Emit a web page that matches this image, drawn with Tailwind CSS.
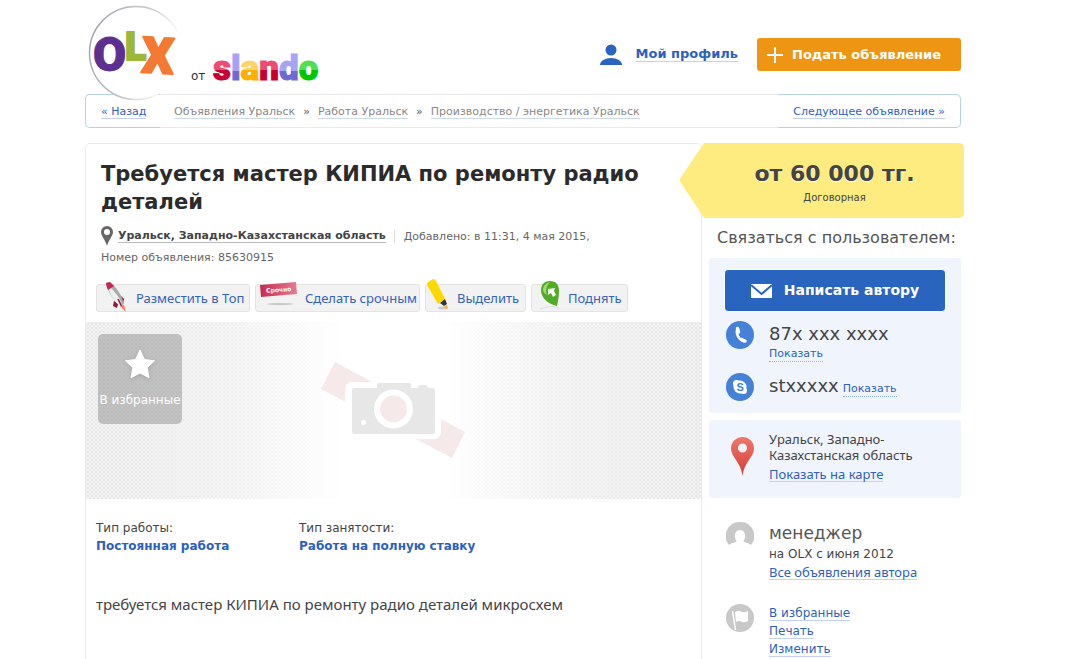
<!DOCTYPE html>
<html lang="ru">
<head>
    <meta charset="UTF-8">
    <meta name="viewport" content="width=device-width, initial-scale=1.0">
    <title>Требуется мастер КИПИА по ремонту радио деталей</title>
    <script src="https://cdn.jsdelivr.net/npm/@tailwindcss/browser@4"></script>
</head>
<body class="bg-white pr-[18px] font-['DejaVu_Sans',Verdana,sans-serif] text-[#444]">
<div class="max-w-[880px] mx-auto pr-1">

    <!-- Шапка -->
    <header class="relative z-10 flex justify-between h-[94px]">
        <a href="/" aria-label="OLX от slando" class="block">
            <svg width="240" height="106" viewBox="85 0 240 106">
                <defs>
                    <linearGradient id="ring" x1="0" y1="0.3" x2="1" y2="0.6">
                        <stop offset="0" stop-color="#a0a5ac"/>
                        <stop offset="0.5" stop-color="#c4c7cb"/>
                        <stop offset="0.9" stop-color="#fff"/>
                    </linearGradient>
                    <linearGradient id="red" gradientUnits="userSpaceOnUse" x1="0" y1="53" x2="0" y2="82">
                        <stop offset="0.58" stop-color="#ee4a72"/><stop offset="0.58" stop-color="#c80032"/>
                    </linearGradient>
                    <linearGradient id="violet" gradientUnits="userSpaceOnUse" x1="0" y1="53" x2="0" y2="82">
                        <stop offset="0.63" stop-color="#a5a4f4"/><stop offset="0.63" stop-color="#6b6bd2"/>
                    </linearGradient>
                    <linearGradient id="yellow" gradientUnits="userSpaceOnUse" x1="0" y1="53" x2="0" y2="82">
                        <stop offset="0.58" stop-color="#ffd366"/><stop offset="0.58" stop-color="#ffae00"/>
                    </linearGradient>
                    <linearGradient id="green" gradientUnits="userSpaceOnUse" x1="0" y1="53" x2="0" y2="82">
                        <stop offset="0.58" stop-color="#4fdf52"/><stop offset="0.58" stop-color="#00c800"/>
                    </linearGradient>
                </defs>
                <circle cx="136" cy="53" r="46.500" fill="#fff" stroke="url(#ring)" stroke-width="1.500"/>
                <g font-family="Roboto" font-weight="900" stroke-linejoin="round">
                    <text x="93" y="71" font-size="48" fill="#5c2f91" stroke="#5c2f91">O</text>
                    <text x="125" y="60" font-size="39" fill="#9cb83a" stroke="#9cb83a" stroke-width="2">L</text>
                    <text x="142" y="73" font-size="50" fill="#f47932" stroke="#f47932" stroke-width="2" transform="rotate(3 158 55)">X</text>
                </g>
                <text x="191" y="80" font-size="12" fill="#333">от</text>
                <text x="213" y="80" font-family="Roboto" font-weight="900" font-size="35"><tspan fill="url(#red)" stroke="url(#red)">s</tspan><tspan fill="url(#violet)" stroke="url(#violet)">l</tspan><tspan fill="url(#yellow)" stroke="url(#yellow)">a</tspan><tspan fill="url(#red)" stroke="url(#red)">n</tspan><tspan fill="url(#violet)" stroke="url(#violet)">d</tspan><tspan fill="url(#green)" stroke="url(#green)">o</tspan></text>
            </svg>
        </a>
        <div class="flex items-center h-[33px] mt-[38px]">
            <svg width="22" height="22" viewBox="0 0 22 22" fill="#2964bf">
                <circle cx="11" cy="6" r="5.500"/>
                <path d="M0 21c0-4 5-7 11-7s11 3 11 7z"/>
            </svg>
            <a href="/myaccount" class="ml-[14px] text-[13px] leading-[14px] font-bold text-[#2d5fbe] border-b border-[#c3d2ee]">Мой профиль</a>
            <button type="button" class="flex items-center ml-[19px] w-[204px] h-[33px] pl-[10px] rounded-[3px] bg-[#ee9613] text-white text-[13px] font-bold whitespace-nowrap">
                <svg class="mr-[9px]" width="16" height="16" viewBox="0 0 16 16" stroke="#fff" stroke-width="2"><path d="M8 0v16M0 8h16"/></svg>
                Подать объявление
            </button>
        </div>
    </header>

    <!-- Навигация -->
    <nav class="flex h-[34px] text-[11px] leading-[13px] text-[#2d5fbe]">
        <div class="w-[75px] pl-[15px] pt-[10px] border border-r-0 border-[#b5d3e2] rounded-l-[5px]">
            <a href="#" class="border-b border-[#c3d2ee]">« Назад</a>
        </div>
        <div class="flex flex-1 gap-2 pl-[14px] pt-[10px] border-y border-[#e9e9e9] whitespace-nowrap text-[#555]">
            <a href="#" class="h-[14px] text-[#888] border-b border-[#ccd9e6]">Объявления Уральск</a>
            <span>»</span>
            <a href="#" class="h-[14px] text-[#888] border-b border-[#ccd9e6]">Работа Уральск</a>
            <span>»</span>
            <a href="#" class="h-[14px] text-[#888] border-b border-[#ccd9e6]">Производство / энергетика Уральск</a>
        </div>
        <div class="w-[183px] pr-[15px] pt-[10px] text-right whitespace-nowrap border border-l-0 border-[#b5d3e2] rounded-r-[5px]">
            <a href="#" class="border-b border-[#c3d2ee]">Следующее объявление »</a>
        </div>
    </nav>

    <div class="flex gap-[7px] mt-[15px]">
        <!-- Объявление -->
        <main class="flex-1 border border-b-0 border-[#ebebeb] rounded-t-[5px]">
            <div class="pl-[15px] pt-4">
                <h1 class="max-w-[560px] text-[21px] leading-7 font-bold text-[#2b2b2b]">Требуется мастер КИПИА по ремонту радио деталей</h1>
                <div class="flex items-center mt-[9px] h-[22px] text-[11px] leading-[13px] text-[#666]">
                    <svg class="mr-[5px]" width="12" height="20" viewBox="0 0 12 20"><path fill="#666" fill-rule="evenodd" d="M6 0a6 6 0 0 1 6 6c0 4-4 7-6 14C4 13 0 10 0 6a6 6 0 0 1 6-6zm0 3a3 3 0 1 0 0 6 3 3 0 0 0 0-6z"/></svg>
                    <a href="#" class="font-bold text-[#444] border-b border-[#bbb]">Уральск, Западно-Казахстанская область</a>
                    <span class="ml-2 pl-[9px] border-l border-[#ddd]">Добавлено: в 11:31, 4 мая 2015,</span>
                </div>
                <p class="h-[22px] text-[11px] leading-[22px] text-[#666]">Номер объявления: 85630915</p>
            </div>

            <!-- Продвижение -->
            <div class="flex gap-[5px] mt-[15px] ml-[10px] font-['Noto_Sans',Tahoma,sans-serif] text-[13px] leading-4 text-[#3463bb] whitespace-nowrap">
                <button type="button" class="relative w-[154px] h-7 pl-[39px] text-left bg-[#f2f2f2] border border-[#e3e3e3] rounded-[3px]">
                    <svg class="absolute left-[8px] -top-[4px]" width="24" height="32" viewBox="0 0 24 32">
                        <path d="M9 20l-1 5 4 2 1-4z" fill="#8c1838"/>
                        <path d="M15 14l4 4-1 5z" fill="#8c1838"/>
                        <path d="M1 2l4-1c6 5 12 13 14 22l-4 2C8 19 3 11 1 2z" fill="#a8a8a8"/>
                        <path d="M3 5c5 3 12 11 14 19l-2 1C8 19 4 12 3 5z" fill="#ededed"/>
                        <path d="M1 2l4-1 4 4-6 4C2 7 1 4 1 2z" fill="#c52850"/>
                        <path d="M13 18l4 8" stroke="#8c1838" stroke-width="1.500"/>
                        <path d="M15 25l4-1 2 7z" fill="#f47b5a"/>
                    </svg>
                    Разместить в Топ
                </button>
                <button type="button" class="relative w-[165px] h-7 pl-[49px] text-left bg-[#f2f2f2] border border-[#e3e3e3] rounded-[3px]">
                    <svg class="absolute left-[4px] -top-[4px]" width="38" height="28" viewBox="0 0 38 28">
                        <defs><linearGradient id="flag"><stop offset="0" stop-color="#c62a52"/><stop offset="1" stop-color="#e27d96"/></linearGradient></defs>
                        <path d="M0 4l36-3 1 12-36 3z" fill="url(#flag)"/>
                        <text x="6" y="11" font-family="DejaVu Sans" font-size="6" font-weight="700" fill="#fff" transform="rotate(-4 18 8)">Срочно</text>
                        <ellipse cx="20" cy="23" rx="13" ry="1" fill="#c8c8c8"/>
                    </svg>
                    Сделать срочным
                </button>
                <button type="button" class="relative w-[101px] h-7 pl-[31px] text-left bg-[#f2f2f2] border border-[#e3e3e3] rounded-[3px]">
                    <svg class="absolute left-0 -top-[7px]" width="24" height="32" viewBox="0 0 24 32">
                        <ellipse cx="17" cy="30" rx="5" ry="1.500" fill="#ccc"/>
                        <path d="M1 5l6-4q2 0 3 2l9 18-7 5L1 7z" fill="#ffd800"/>
                        <path d="M14 25l5-4 2 5-3 2z" fill="#333"/>
                        <path d="M18 28l3-1 1 3-2 1z" fill="#f3b73c"/>
                    </svg>
                    Выделить
                </button>
                <button type="button" class="relative w-[97px] h-7 pl-[36px] text-left bg-[#f2f2f2] border border-[#e3e3e3] rounded-[3px]">
                    <svg class="absolute left-[8px] -top-[5px]" width="22" height="32" viewBox="0 0 22 32">
                        <path d="M0 29q10-4 18-2v3" fill="none" stroke="#ddd"/>
                        <path d="M1 10C1 4 5 1 10 1c6 0 9 4 9 10 0 5-1 10-2 15C8 24 1 18 1 10z" fill="#51ab25"/>
                        <path d="M3 10c0-4 3-7 7-8-3 3-5 8-3 13-2-1-4-3-4-5z" fill="#9bd96f"/>
                        <path d="M8 9l7-1-1 3 2 4-3 2-2-4-3 2z" fill="#f3faf0"/>
                    </svg>
                    Поднять
                </button>
            </div>

            <!-- Фото -->
            <div class="relative h-[177px] mt-[10px] bg-[radial-gradient(circle,#e6e6e6_1px,transparent_1px),radial-gradient(circle,#e9e9e9_1px,transparent_1px)] bg-size-[4px_4px] bg-position-[0_0,2px_2px] bg-[#f4f4f4]">
                <div class="flex justify-center h-full pr-[2px] bg-[linear-gradient(90deg,#ffffff00,#ffffff33_20%,white_42%,white_58%,#ffffff33_80%,#ffffff00)]">
                    <svg class="mt-[38px]" width="146" height="102" viewBox="320 360 146 102">
                        <path d="M335 362l130 70-13 26-131-69z" fill="#f6e9ea"/>
                        <path d="M352 382h24l1-3h34l3 4h20a7 7 0 0 1 7 7v42a7 7 0 0 1-7 7h-82a7 7 0 0 1-7-7v-43a7 7 0 0 1 7-7z" fill="#fff"/>
                        <path d="M354 388h23v-3q0-2 2-2h30q2 0 2 2v3h7q0-3 3-3h4q3 0 3 3h5q2 0 2 2v42q0 2-2 2h-79q-2 0-2-2v-42q0-2 2-2z" fill="#e7e7e7"/>
                        <circle cx="393.500" cy="409" r="16.500" fill="#f6e9ea" stroke="#fff" stroke-width="6"/>
                        <circle cx="363.500" cy="422.500" r="2.500" fill="#fff"/>
                    </svg>
                </div>
                <button type="button" class="absolute left-3 top-3 flex flex-col items-center w-[84px] h-[90px] pt-[13px] rounded-[5px] bg-black/20 text-white text-[12px] whitespace-nowrap">
                    <svg class="mb-[10px] drop-shadow-sm" width="32" height="34" viewBox="0 0 32 34"><path d="M16 3l4.500 9.500 10 1.300-7.300 7 1.800 10-9-4.800-9 4.800 1.800-10-7.300-7 10-1.300z" fill="#fff" stroke="#fff" stroke-linejoin="round"/></svg>
                    В избранные
                </button>
            </div>

            <div class="flex mt-5 ml-[10px] text-[12px] leading-[18px]">
                <div class="w-[203px]">
                    <p>Тип работы:</p>
                    <a href="#" class="font-bold text-[#2d5fbe]">Постоянная работа</a>
                </div>
                <div>
                    <p>Тип занятости:</p>
                    <a href="#" class="font-bold text-[#2d5fbe]">Работа на полную ставку</a>
                </div>
            </div>
            <p class="mt-[39px] ml-[10px] font-['Noto_Sans',Tahoma,sans-serif] text-[15px] leading-5">требуется мастер КИПИА по ремонту радио деталей микросхем</p>
        </main>

        <!-- Автор -->
        <aside class="w-[252px] pb-1">
            <div class="relative flex h-[75px] -ml-[29px] -mr-[3px]">
                <svg width="25" height="75" viewBox="0 0 25 75"><path d="M25 0h-1L1 34q-2 3 0 6l23 35h1z" fill="#ffec80"/></svg>
                <div class="flex-1 pt-[17px] rounded-r-[5px] bg-[#ffec80] text-center">
                    <p class="text-[22px] leading-7 font-bold [text-shadow:0_1px_0_white]">от 60 000 тг.</p>
                    <p class="text-[10px] leading-5">Договорная</p>
                </div>
            </div>
            <h2 class="pl-2 pt-[10px] h-10 text-[16px] leading-5 text-[#555] whitespace-nowrap">Связаться с пользователем:</h2>

            <div class="h-[155px] px-[15px] pt-[11px] rounded-[3px] bg-[#f0f5fd]">
                <button type="button" class="flex items-center justify-center gap-3 w-full h-[43px] rounded-[4px] border border-white bg-[#2964bf] text-white text-[14px] font-bold">
                    <svg width="21" height="14" viewBox="0 0 21 14"><path d="M0 0h21v14H0z" fill="#fff"/><path d="M0 1l10.500 9L21 1" fill="none" stroke="#2964bf" stroke-width="2"/></svg>
                    Написать автору
                </button>
                <div class="flex mt-[9px] ml-[2px] h-[52px]">
                    <svg class="mr-[15px]" width="28" height="28" viewBox="0 0 28 28">
                        <circle cx="14" cy="14" r="14" fill="#4681d8"/>
                        <path d="M11.500 7.500C9.500 12 12 18.500 18.500 20.500" fill="none" stroke="#fff" stroke-width="2.500"/>
                        <path d="M11.500 7.500l1 3.500M15.500 18.500l3.500 1.500" stroke="#fff" stroke-width="3.500" stroke-linecap="round"/>
                    </svg>
                    <div>
                        <p class="text-[18px] leading-[26px]">87x xxx xxxx</p>
                        <a href="#" class="block w-fit text-[11px] leading-[14px] text-[#2d5fbe] border-b border-dotted border-[#8fb0e4]">Показать</a>
                    </div>
                </div>
                <div class="flex ml-[2px]">
                    <svg class="mr-[15px]" width="28" height="28" viewBox="0 0 28 28">
                        <circle cx="14" cy="14" r="14" fill="#4681d8"/>
                        <circle cx="14" cy="14" r="6.500" fill="#fff"/><circle cx="10.500" cy="10.500" r="3.500" fill="#fff"/><circle cx="17.500" cy="17.500" r="3.500" fill="#fff"/>
                        <text x="10.500" y="18" font-family="Liberation Sans" font-size="11" font-weight="700" fill="#4681d8">S</text>
                    </svg>
                    <p class="flex items-baseline gap-1 text-[18px] leading-[26px]">stxxxxx
                        <a href="#" class="text-[11px] leading-[14px] text-[#2d5fbe] border-b border-dotted border-[#8fb0e4]">Показать</a>
                    </p>
                </div>
            </div>

            <div class="flex h-[78px] mt-[7px] pl-[22px] pt-[11px] rounded-[3px] bg-[#f0f5fd] font-['Noto_Sans',Tahoma,sans-serif] text-[13px] leading-4">
                <svg class="mt-[6px] mr-[15px]" width="23" height="39" viewBox="0 0 23 39">
                    <defs><linearGradient id="pin" x1="0" y1="0" x2="0" y2="1"><stop offset="0" stop-color="#f1766b"/><stop offset="1" stop-color="#cf3f38"/></linearGradient></defs>
                    <path fill="url(#pin)" fill-rule="evenodd" d="M11.500 0A11.500 11.500 0 0 1 23 11.500C23 20 13 25 11.500 39 10 25 0 20 0 11.500A11.500 11.500 0 0 1 11.500 0zm0 6.500a4.500 4.500 0 1 0 0 9 4.500 4.500 0 0 0 0-9z"/>
                </svg>
                <div>
                    <p>Уральск, Западно-<br>Казахстанская область</p>
                    <a href="#" class="block w-fit mt-1 leading-[14px] text-[#2d5fbe] border-b border-[#c3d2ee]">Показать на карте</a>
                </div>
            </div>

            <div class="flex mt-6 pl-[17px] text-[12px]">
                <svg class="mr-[15px]" width="28" height="28" viewBox="0 0 28 28">
                    <path d="M14 0a14 14 0 0 1 11 23q-2-2-7-3-1-1 0-2c2-2 2-10-4-10s-6 8-4 10q1 1 0 2-5 1-7 3A14 14 0 0 1 14 0z" fill="#c8c8c8"/>
                </svg>
                <div>
                    <p class="text-[17px] leading-[22px] text-[#555]">менеджер</p>
                    <p class="leading-5">на OLX с июня 2012</p>
                    <a href="#" class="block w-fit mt-px font-['Noto_Sans',Tahoma,sans-serif] text-[13px] leading-[14px] text-[#2d5fbe] border-b border-[#c3d2ee]">Все объявления автора</a>
                </div>
            </div>

            <div class="flex mt-6 pl-[17px] text-[12px] leading-[14px] text-[#2d5fbe]">
                <svg class="mr-[15px]" width="28" height="28" viewBox="0 0 28 28">
                    <circle cx="14" cy="14" r="14" fill="#c8c8c8"/>
                    <path d="M9 8q4-2 7 0 3 1 6-1v10q-3 2-6 1-3-2-6 0z" fill="#fff"/>
                    <path d="M6.500 7l3 19" stroke="#fff" stroke-width="1.500"/>
                </svg>
                <ul class="flex flex-col items-start gap-[3px] pt-[2px]">
                    <li class="border-b border-[#c3d2ee]"><a href="#">В избранные</a></li>
                    <li class="border-b border-[#c3d2ee]"><a href="#">Печать</a></li>
                    <li class="border-b border-[#c3d2ee]"><a href="#">Изменить</a></li>
                </ul>
            </div>
        </aside>
    </div>
</div>
</body>
</html>
